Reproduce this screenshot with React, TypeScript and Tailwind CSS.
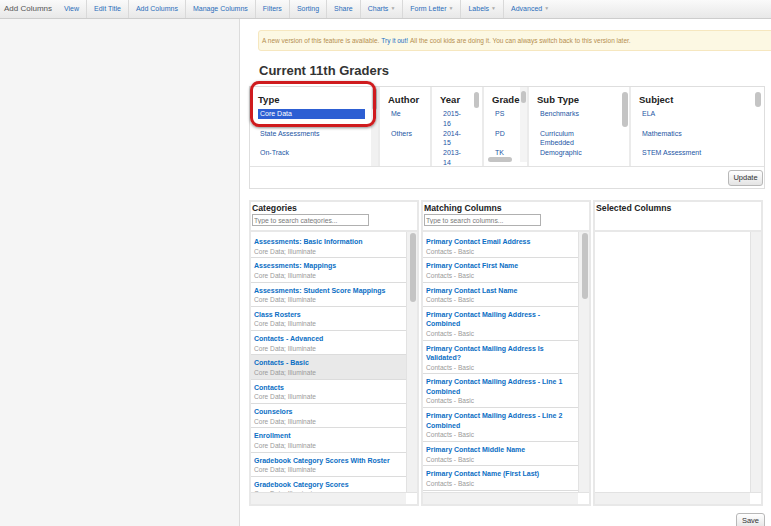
import React from "react";

const navItems: { label: string; caret?: boolean }[] = [
  { label: "View" },
  { label: "Edit Title" },
  { label: "Add Columns" },
  { label: "Manage Columns" },
  { label: "Filters" },
  { label: "Sorting" },
  { label: "Share" },
  { label: "Charts", caret: true },
  { label: "Form Letter", caret: true },
  { label: "Labels", caret: true },
  { label: "Advanced", caret: true },
];

const categories = [
  "Assessments: Basic Information",
  "Assessments: Mappings",
  "Assessments: Student Score Mappings",
  "Class Rosters",
  "Contacts - Advanced",
  "Contacts - Basic",
  "Contacts",
  "Counselors",
  "Enrollment",
  "Gradebook Category Scores With Roster",
  "Gradebook Category Scores",
];

const matching = [
  "Primary Contact Email Address",
  "Primary Contact First Name",
  "Primary Contact Last Name",
  "Primary Contact Mailing Address - Combined",
  "Primary Contact Mailing Address Is Validated?",
  "Primary Contact Mailing Address - Line 1 Combined",
  "Primary Contact Mailing Address - Line 2 Combined",
  "Primary Contact Middle Name",
  "Primary Contact Name (First Last)",
  "Primary Contact Phone",
];

function ListItem({ title, sub, selected }: { title: string; sub: string; selected?: boolean }) {
  return (
    <div
      className={`pl-[3px] pr-[3px] pt-[3px] pb-[0.8px] border-b border-[#dcdcdc] ${
        selected ? "bg-[#e9e9e9]" : "bg-white"
      }`}
    >
      <div className="text-[7px] leading-[9.5px] font-bold text-[#0b6ec4]">{title}</div>
      <div className="text-[6.6px] leading-[10px] text-[#9a9a9a]">{sub}</div>
    </div>
  );
}

function Panel({
  title,
  placeholder,
  children,
  thumb,
}: {
  title: string;
  placeholder?: string;
  children?: React.ReactNode;
  thumb?: number;
}) {
  return (
    <div className="w-[170px] h-[306px] border-2 border-[#e8e8e8] flex flex-col bg-white">
      <div className="h-[30px] pl-[1px] border-b-2 border-[#e8e8e8]">
        <div className="text-[8.7px] leading-[11px] pt-[1px] font-bold text-[#222]">{title}</div>
        {placeholder && (
          <input
            readOnly
            placeholder={placeholder}
            className="block w-[117px] h-[12px] border border-[#b0b0b0] px-[1px] text-[6.8px] leading-[10px] text-[#777] placeholder:text-[#7a7a7a] outline-none font-['Liberation_Sans',Arial,sans-serif]"
          />
        )}
      </div>
      <div className="flex-1 flex min-h-0">
        <div className="flex-1 overflow-hidden bg-white pt-[2px]">{children}</div>
        <div className="w-[11px] bg-[#f1f1f1] pt-[1px] px-[2.5px] border-l border-[#e2e2e2]">
          {thumb ? <div className="w-[6px] rounded-[3px] bg-[#c4c4c4]" style={{ height: thumb }} /> : null}
        </div>
      </div>
      <div className="h-[12px] flex bg-[#f1f1f1] border-t border-[#e2e2e2]">
        <div className="flex-1" />
        <div className="w-[11px] bg-white" />
      </div>
    </div>
  );
}

function FItem({ children, selected, pl = "pl-[3px]" }: { children: React.ReactNode; selected?: boolean; pl?: string }) {
  return (
    <div
      className={`min-h-[19.5px] text-[7px] leading-[9.5px] ${pl} ${
        selected ? "" : "text-[#2456a4]"
      }`}
    >
      <span className={selected ? "block bg-[#2d5fd3] text-white px-[2px] -ml-[2px]" : ""}>{children}</span>
    </div>
  );
}

function FHead({ children }: { children: React.ReactNode }) {
  return <div className="text-[9.5px] leading-[12px] font-bold text-[#222] mb-[3px] whitespace-nowrap">{children}</div>;
}

export default function App() {
  return (
    <div className="w-[771px] h-[526px] overflow-hidden flex flex-col bg-white font-['Liberation_Sans',Arial,Helvetica,sans-serif]">
      {/* top bar */}
      <div className="h-[19px] shrink-0 flex items-stretch bg-linear-to-b from-[#fafafa] to-[#e8e8e8] border-b border-[#cdcdcd]">
        <div className="w-[57px] pl-[4px] flex items-center text-[8px] text-[#555]">Add Columns</div>
        {navItems.map((n, i) => (
          <div
            key={n.label}
            className={`px-[7px] flex items-center text-[7px] text-[#2a6dbb] ${i > 0 ? "border-l border-[#d9d9d9]" : ""}`}
          >
            {n.label}
            {n.caret && <span className="ml-[2px] text-[5px] text-[#aaa]">▼</span>}
          </div>
        ))}
      </div>

      <div className="flex-1 flex min-h-0">
        {/* sidebar */}
        <div className="w-[240px] shrink-0 bg-[#f5f5f5] border-r border-[#dcdcdc]" />

        {/* main */}
        <div className="flex-1 flex flex-col overflow-hidden">
          <div className="mt-[11px] ml-[18px] w-[540px] h-[21px] shrink-0 flex items-center pl-[3px] bg-[#fcf8e3] border border-[#f6e7bf] rounded-[3px] text-[6.5px] text-[#b58e4f] whitespace-nowrap">
            A new version of this feature is available.&nbsp;<span className="text-[#1a6fc4]">Try it out!</span>&nbsp;All the cool kids are doing it. You can always switch back to this version later.
          </div>

          <div className="mt-[11px] ml-[19px] shrink-0 text-[13px] leading-[17px] font-bold text-[#333]">Current 11th Graders</div>

          {/* filter panel */}
          <div className="relative mt-[7px] ml-[9px] w-[516px] shrink-0 border border-[#dedede] bg-white">
            <div className="h-[79px] flex overflow-hidden">
              {/* Type */}
              <div className="w-[130px] flex border-r-2 border-[#ebebeb]">
                <div className="flex-1 pl-[8px] pr-[6px] pt-[7px]">
                  <FHead>Type</FHead>
                  <FItem selected pl="pl-[2px]">Core Data</FItem>
                  <FItem pl="pl-[2px]">State Assessments</FItem>
                  <FItem pl="pl-[2px]">On-Track</FItem>
                </div>
                <div className="w-[7px] bg-[#f1f1f1] pt-[1px] px-[1px]">
                  <div className="h-[22px] rounded-[3px] bg-[#c4c4c4]" />
                </div>
              </div>
              {/* Author */}
              <div className="w-[52px] pl-[8px] pt-[7px] border-r-2 border-[#ebebeb]">
                <FHead>Author</FHead>
                <FItem>Me</FItem>
                <FItem>Others</FItem>
              </div>
              {/* Year */}
              <div className="relative w-[52px] pl-[8px] pt-[7px] border-r-2 border-[#ebebeb]">
                <FHead>Year</FHead>
                <FItem>2015-<br />16</FItem>
                <FItem>2014-<br />15</FItem>
                <FItem>2013-<br />14</FItem>
                <div className="absolute left-[42px] top-[5px] w-[5px] h-[16px] rounded-[3px] bg-[#c4c4c4]" />
              </div>
              {/* Grade */}
              <div className="relative w-[45px] border-r-2 border-[#ebebeb]">
                <div className="w-[36px] overflow-hidden pl-[8px] pt-[7px] whitespace-nowrap">
                  <FHead>Grade</FHead>
                  <FItem>PS</FItem>
                  <FItem>PD</FItem>
                  <FItem>TK</FItem>
                </div>
                <div className="absolute left-[36px] top-0 w-[7px] h-[75px] bg-[#f4f4f4]">
                  <div className="mt-[4px] mx-[1px] h-[12px] rounded-[3px] bg-[#c4c4c4]" />
                </div>
                <div className="absolute left-0 top-[68px] w-[36px] h-[9px] bg-white">
                  <div className="ml-[4px] mt-[2px] w-[24px] h-[5px] rounded-[3px] bg-[#c4c4c4]" />
                </div>
              </div>
              {/* Sub Type */}
              <div className="relative w-[102px] pl-[8px] pt-[7px] border-r-2 border-[#ebebeb]">
                <FHead>Sub Type</FHead>
                <FItem>Benchmarks</FItem>
                <FItem>Curriculum<br />Embedded</FItem>
                <FItem>Demographic</FItem>
                <div className="absolute left-[93px] top-[5px] w-[6px] h-[35px] rounded-[3px] bg-[#c4c4c4]" />
              </div>
              {/* Subject */}
              <div className="relative flex-1 pl-[8px] pt-[7px]">
                <FHead>Subject</FHead>
                <FItem>ELA</FItem>
                <FItem>Mathematics</FItem>
                <FItem>STEM Assessment</FItem>
                <div className="absolute left-[124px] top-[5px] w-[6px] h-[15px] rounded-[3px] bg-[#c4c4c4]" />
              </div>
            </div>
            <div className="h-[22px] border-t border-[#e2e2e2] flex justify-end items-center pr-[1px]">
              <button className="w-[35px] h-[16px] rounded-[3px] border border-[#b8b8b8] bg-linear-to-b from-white to-[#e4e4e4] text-[7.5px] text-[#333] font-['Liberation_Sans',Arial,sans-serif]">
                Update
              </button>
            </div>

            {/* red highlight */}
            <div className="absolute left-[0px] top-[-6px] w-[126px] h-[46px] rounded-[9px] border-[3px] border-[#cf1b1e] shadow-[0_1px_3px_rgba(0,0,0,0.45)] pointer-events-none" />
          </div>

          {/* bottom panels */}
          <div className="mt-[11px] ml-[9px] flex gap-[2px] shrink-0">
            <Panel title="Categories" placeholder="Type to search categories..." thumb={69}>
              {categories.map((c) => (
                <ListItem key={c} title={c} sub="Core Data; Illuminate" selected={c === "Contacts - Basic"} />
              ))}
            </Panel>
            <Panel title="Matching Columns" placeholder="Type to search columns..." thumb={66}>
              {matching.map((c) => (
                <ListItem key={c} title={c} sub="Contacts - Basic" />
              ))}
            </Panel>
            <Panel title="Selected Columns" />
          </div>

          <div className="mt-[7px] flex justify-end pr-[6px] shrink-0">
            <button className="w-[29px] h-[16px] rounded-[3px] border border-[#b8b8b8] bg-linear-to-b from-white to-[#e4e4e4] text-[7.5px] text-[#333] font-['Liberation_Sans',Arial,sans-serif]">
              Save
            </button>
          </div>
        </div>
      </div>
    </div>
  );
}
